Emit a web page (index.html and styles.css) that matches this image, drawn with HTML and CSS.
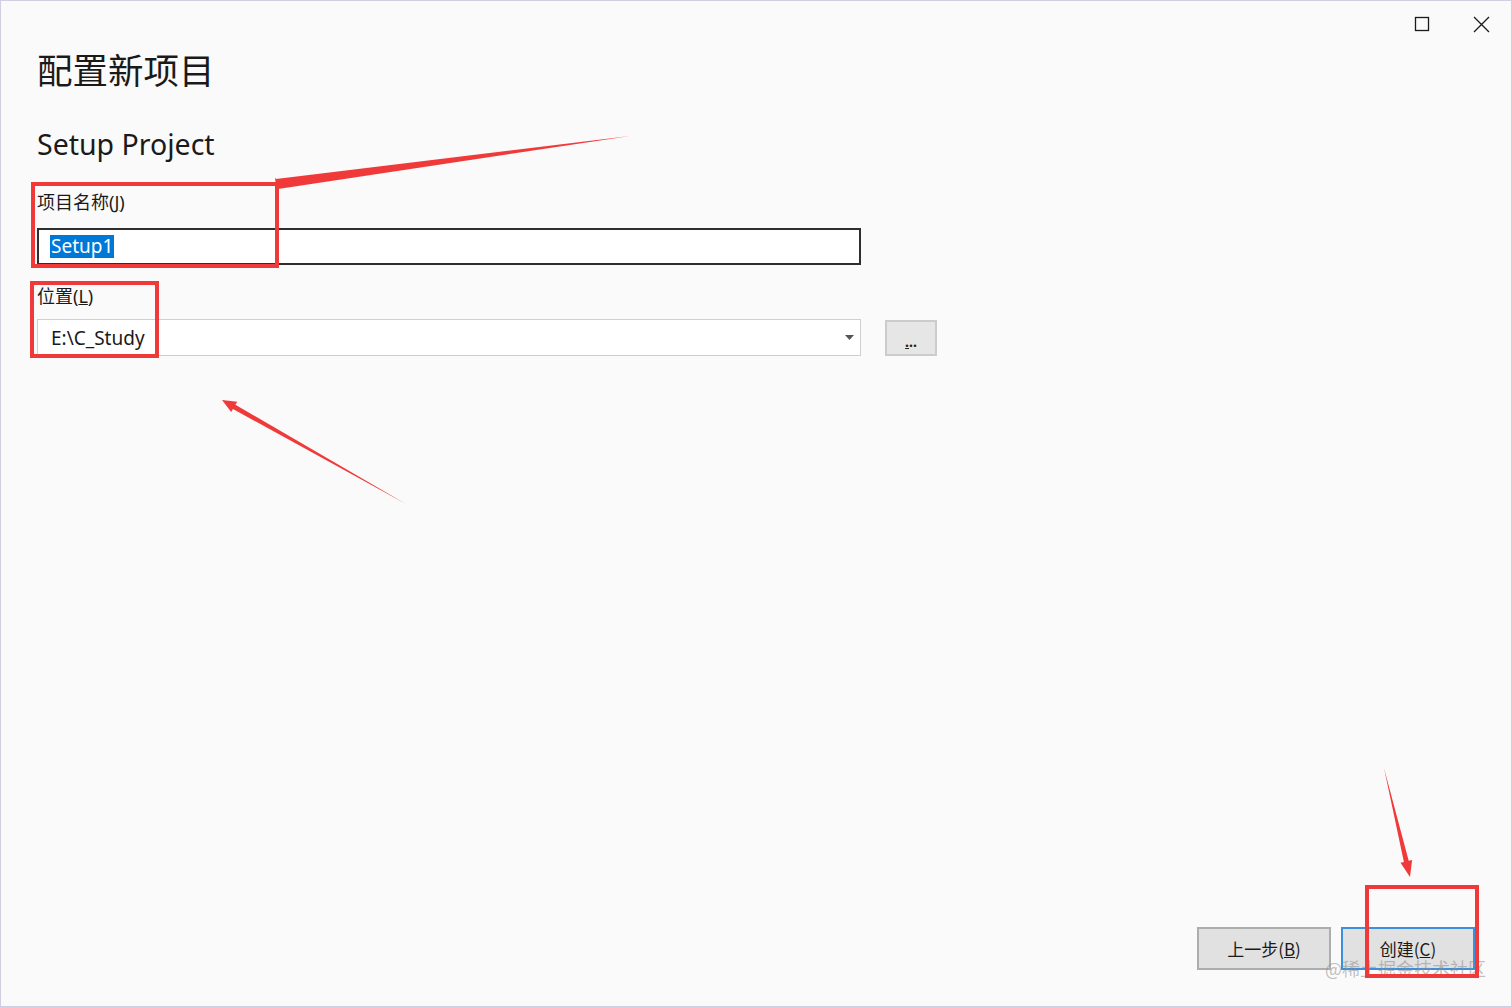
FILE: index.html
```html
<!DOCTYPE html>
<html lang="zh-CN">

<head>
    <meta charset="UTF-8">
    <meta name="viewport" content="width=device-width, initial-scale=1.0">
    <title>配置新项目</title>

    <link rel="stylesheet" href="styles.css">

</head>

<body>
    <div class="window">
        <div class="titlebar">
            <span class="ctl">
                <svg width="16" height="16" viewBox="0 0 16 16"><rect x="1.5" y="1.5" width="13" height="13" fill="none" stroke="#1a1a1a" stroke-width="1.3"/></svg>
            </span>
            <span class="ctl">
                <svg width="17" height="17" viewBox="0 0 17 17"><path d="M1 1 L16 16 M16 1 L1 16" stroke="#1a1a1a" stroke-width="1.3"/></svg>
            </span>
        </div>

        <main class="content">
            <h1>配置新项目</h1>
            <h2>Setup Project</h2>

            <div class="label">项目名称(<u>J</u>)</div>
            <div class="textbox"><span class="sel">Setup1</span></div>

            <div class="label label-loc">位置(<u>L</u>)</div>
            <div class="row">
                <div class="combo">
                    <span>E:\C_Study</span>
                    <svg width="9" height="5" viewBox="0 0 9 5"><path d="M0 0 L9 0 L4.5 5 Z" fill="#555"/></svg>
                </div>
                <button class="browse"><u>.</u>..</button>
            </div>
        </main>

        <footer class="actions">
            <button class="btn">上一步(<u>B</u>)</button>
            <button class="btn btn-default">创建(<u>C</u>)</button>
        </footer>

        <div class="watermark">@稀土掘金技术社区</div>

        <!-- red annotations drawn on top of the screenshot -->
        <svg class="marks" width="1512" height="1007" viewBox="0 0 1512 1007">
            <g fill="none" stroke="#f03a3a" stroke-width="4">
                <rect x="33" y="184" width="244" height="82"/>
                <rect x="32" y="283" width="125" height="73"/>
                <rect x="1367" y="887" width="110" height="89"/>
            </g>
            <g fill="#f03a3a">
                <polygon points="276,179 630,136 278,189"/>
                <polygon points="275,178 281,182 276,186"/>
                <polygon points="406,504 235.4,404.7 237.2,401.7 222,400 231.2,412.1 233,409.1"/>
                <polygon points="1384,768 1408.7,860.8 1412.1,860 1410,877 1400.5,862.8 1403.9,862"/>
            </g>
        </svg>
    </div>
</body>

</html>
```

FILE: styles.css
```css
* {
    box-sizing: border-box;
    margin: 0px;
    padding: 0px;
}

body {
    width: 1512px;
    height: 1007px;
    background-color: #fafafa;
    font-family: 'Noto Sans', 'Noto Sans CJK SC', sans-serif;
    color: #1a1a1a;
}

.window {
    position: relative;
    display: flex;
    flex-direction: column;
    width: 1512px;
    height: 1007px;
    border: 1px solid #cfcfdf;
    background-color: #fafafa;
}

.titlebar {
    display: flex;
    justify-content: flex-end;
    align-items: center;
    gap: 43px;
    height: 46px;
    padding: 0 21px 0 0;
}

.ctl {
    display: flex;
}

.content {
    padding: 0 0 0 36px;
}

h1 {
    font-family: 'Noto Sans CJK SC', sans-serif;
    font-weight: 400;
    font-size: 35.5px;
    line-height: 44px;
}

h2 {
    font-weight: 400;
    font-size: 28.5px;
    line-height: 36px;
    margin-top: 35px;
}

.label {
    font-family: 'Noto Sans', 'Noto Sans CJK SC', sans-serif;
    font-size: 18px;
    line-height: 24px;
    margin-top: 28px;
}

.label-loc {
    margin-top: 19px;
}

.textbox {
    display: flex;
    align-items: center;
    width: 824px;
    height: 37px;
    margin-top: 14px;
    padding: 0 0 0 11px;
    border: 2px solid #2e2e2e;
    background-color: #fff;
    font-size: 19px;
}

.sel {
    background-color: #0078d7;
    color: #fff;
    line-height: 23px;
    padding: 0 1px;
}

.row {
    display: flex;
    align-items: center;
    gap: 24px;
    margin-top: 11px;
}

.combo {
    display: flex;
    align-items: center;
    justify-content: space-between;
    width: 824px;
    height: 37px;
    padding: 0 6px 0 13px;
    border: 1px solid #cfcfcf;
    background-color: #fff;
    font-size: 19px;
}

.browse {
    width: 52px;
    height: 36px;
    border: 2px solid #cccccc;
    background-color: #e6e6e6;
    font-family: 'Noto Sans', sans-serif;
    font-size: 14px;
    font-weight: 700;
    padding-top: 8px;
    color: #222;
}

.actions {
    display: flex;
    justify-content: flex-end;
    gap: 10px;
    margin-top: auto;
    padding: 0 36px 36px 0;
}

.btn {
    width: 134px;
    height: 43px;
    border: 2px solid #adadad;
    background-color: #e1e1e1;
    font-family: 'Noto Sans CJK SC', sans-serif;
    font-size: 17px;
    color: #1a1a1a;
}

.btn-default {
    border: 2px solid #3c8fdc;
}

.watermark {
    position: absolute;
    right: 25px;
    bottom: 25px;
    font-family: 'Noto Sans CJK SC', sans-serif;
    font-size: 18px;
    color: rgba(140, 140, 140, 0.55);
}

.marks {
    position: absolute;
    top: -1px;
    left: -1px;
    pointer-events: none;
}
```
